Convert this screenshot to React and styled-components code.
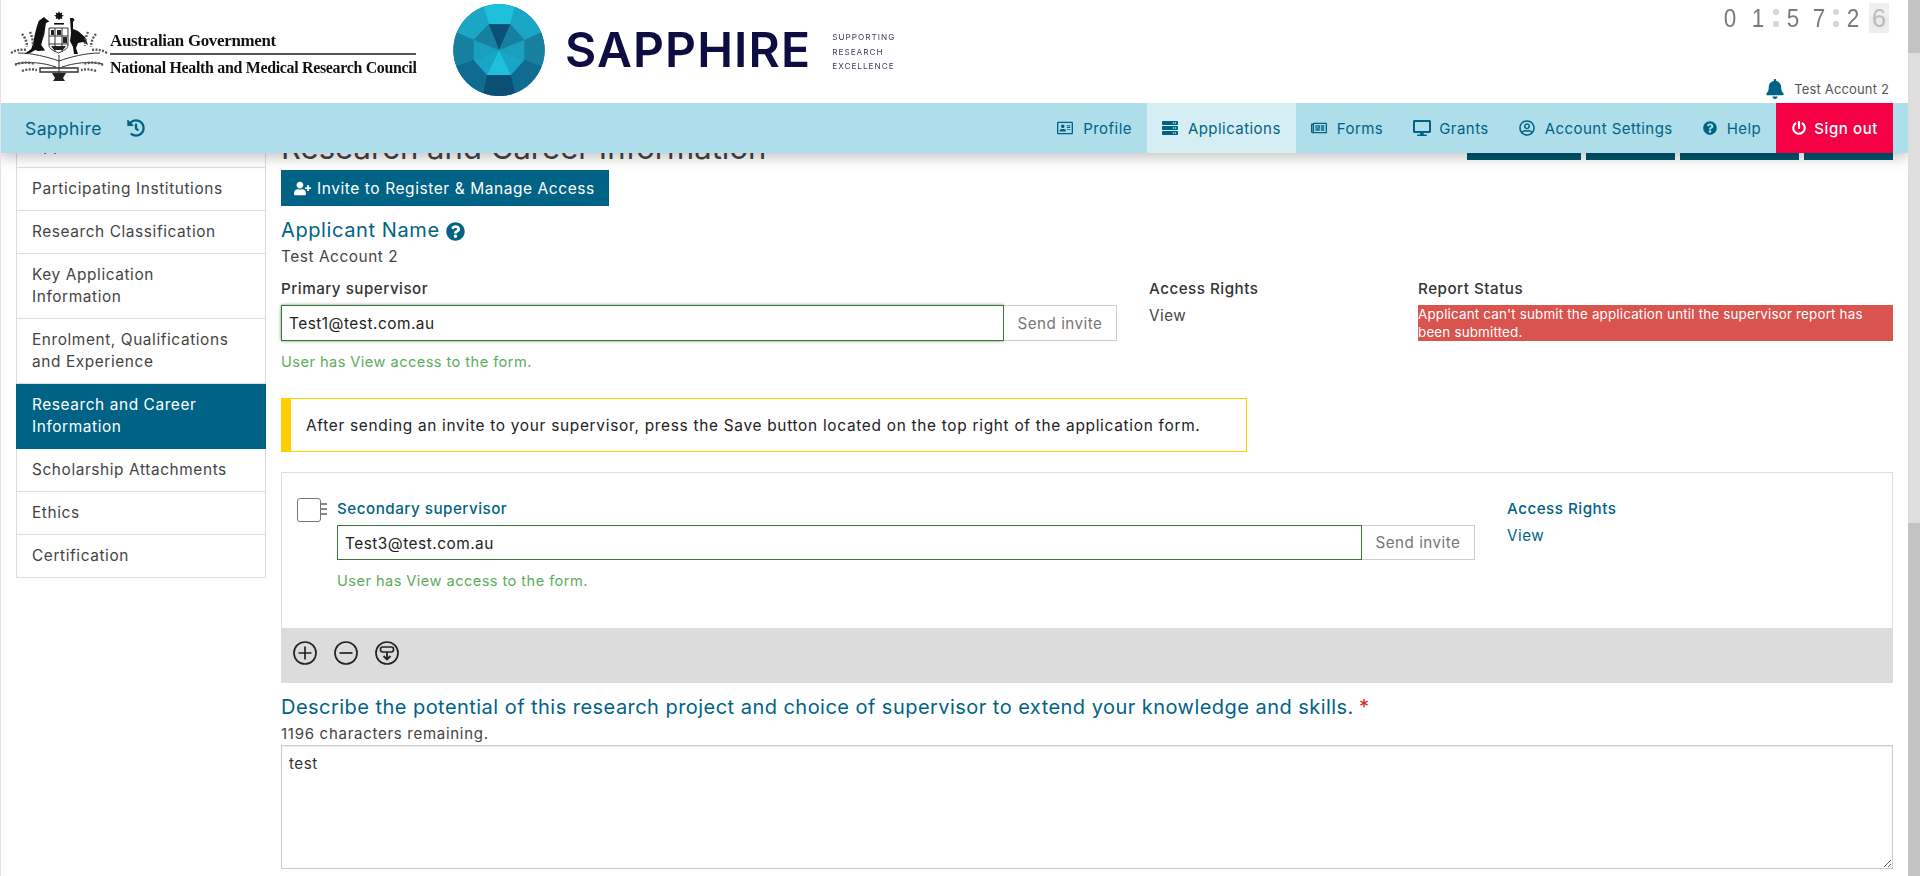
import React from "react";
import styled, { createGlobalStyle } from "styled-components";
import {
  FaRegAddressCard, FaServer, FaRegNewspaper, FaDesktop, FaRegUserCircle,
  FaQuestionCircle, FaPowerOff, FaHistory, FaBell, FaUserPlus,
} from "react-icons/fa";

const BRAND = "#006386";
const FONT = `Inter, "Open Sans", "Liberation Sans", sans-serif`;

const Global = createGlobalStyle`
  html, body { margin: 0; padding: 0; height: 100%; background: #fff; overflow: hidden; }
  body { font-family: ${FONT}; font-size: 15px; color: #444; }
  * { box-sizing: border-box; }
`;

const Shell = styled.div`display: flex; height: 876px; overflow: hidden;`;
const Viewport = styled.div`flex: 1; min-width: 0; overflow: hidden; border-left: 1px solid #e4e4e4;`;
const Scrollbar = styled.div`width: 12px; display: flex; flex-direction: column; background: #dedede;`;
const Thumb = styled.div`height: ${p => p.$h}px; margin-top: ${p => p.$top}px; background: #c3c3c3;`;

const Masthead = styled.header`
  height: 103px; margin-left: -1px; background: #fff; display: flex; position: relative; z-index: 3;
`;
const Brands = styled.div`display: flex; align-items: flex-start;`;
const GovLogo = styled.div`display: flex; padding: 11px 0 0 10px; width: 440px; filter: blur(0.3px);`;
const GovText = styled.div`
  margin-left: 2px; padding-top: 21px; width: 306px; color: #111;
  font-family: "Liberation Serif", serif; font-weight: 700;
`;
const GovLine = styled.div`line-height: 18px; white-space: nowrap; font-size: ${p => p.$size}px; letter-spacing: -0.3px;`;
const GovRule = styled.div`height: 2px; background: #555; margin: 3px 0 4px;`;
const SapphireLogo = styled.div`display: flex; align-items: flex-start; padding: 4px 0 0 13px; filter: blur(0.25px);`;
const Wordmark = styled.div`
  margin-left: 20px; margin-top: 17px; font-family: "Inter", sans-serif; font-weight: 600;
  font-size: 48px; line-height: 58px; color: #0d0d42; letter-spacing: 1.15px;
`;
const Tagline = styled.div`
  margin-left: 21px; margin-top: 26px; font-size: 8.2px; line-height: 14.5px; letter-spacing: 1px; color: #3c3c68;
`;
const MastRight = styled.div`
  margin-left: auto; width: 190px; padding-right: 19px; display: flex; flex-direction: column; align-items: flex-end;
`;
const Clock = styled.div`
  display: flex; align-items: center; margin-top: 3px; height: 30px;
  font-family: "Liberation Sans", sans-serif; font-size: 25px; color: #7b7b7b;
`;
const Digit = styled.span`
  width: ${p => p.$w || 28}px; text-align: center; display: inline-block; line-height: 30px;
  transform: scaleX(.9);
`;
const Colon = styled.span`
  display: flex; flex-direction: column; gap: 6px; width: 8px; align-items: center;
  &::before, &::after { content: ""; width: 6px; height: 6px; border-radius: 50%; background: #d6d6d6; }
`;
const LastDigit = styled.span`
  width: 20px; height: 30px; margin-left: 3px; background: linear-gradient(#f0f0f0 0 45%, #e9e9e9 48%, #efefef 100%);
  color: #bbb; text-align: center; line-height: 30px; display: block;
`;
const UserLine = styled.div`
  margin-top: 45px; display: flex; align-items: center; gap: 9px; font-size: 13px; color: #555; height: 22px; letter-spacing: .15px;
  svg { color: ${BRAND}; font-size: 20px; }
`;

const NavBar = styled.nav`
  position: relative; z-index: 2; height: 50px; margin-left: -1px; padding: 0 15px 0 25px;
  display: flex; align-items: stretch; background: #addee9;
  box-shadow: 0 5px 12px rgba(0,0,0,.22);
`;
const Home = styled.a`
  display: flex; align-items: center; gap: 25px; font-size: 17.5px; letter-spacing: .4px; color: ${BRAND};
  svg { font-size: 18px; }
`;
const NavItems = styled.div`margin-left: auto; display: flex; align-items: stretch;`;
const NavItem = styled.a`
  display: flex; align-items: center; gap: ${p => p.$gap || 10}px; padding: 0 15px; font-size: 15px; letter-spacing: .45px; color: ${BRAND};
  background: ${p => (p.$active ? "#d4eef4" : "transparent")};
  svg { font-size: ${p => p.$icon || 16}px; }
`;
const SignOut = styled(NavItem)`background: #f50044; color: #fff; font-weight: 500; padding: 0 15px 0 16px; gap: 8px; letter-spacing: .6px;`;

const PageBody = styled.div`
  margin-top: -40px; padding: 0 15px 0 15px; display: grid; grid-template-columns: 250px 1612px; column-gap: 15px;
`;
const SideNav = styled.div`margin-top: 12px; display: flex; flex-direction: column;`;
const SideItem = styled.a`
  display: block; padding: 10px 15px; border: 1px solid #ddd; border-top: 0; line-height: 22px; font-size: 15.4px; letter-spacing: .6px;
  background: ${p => (p.$active ? BRAND : "#fff")}; color: ${p => (p.$active ? "#fff" : "#444")};
  ${p => p.$active && "border-color: #006386;"}
`;
const Main = styled.main`display: flex; flex-direction: column; min-width: 0;`;
const TitleRow = styled.div`height: 47px; display: flex; justify-content: space-between; align-items: flex-end;`;
const Title = styled.h1`
  margin: 19px 0 0; align-self: flex-start; font-size: 31px; line-height: 32px; font-weight: 400; color: #444; letter-spacing: .05px; white-space: nowrap;
`;
const TitleActions = styled.div`display: flex; gap: 5px;`;
const TitleAction = styled.div`width: ${p => p.$w}px; height: 40px; background: #00566f;`;

const InviteButton = styled.button`
  position: relative; margin-top: 10px; width: 328px; height: 36px; border: 0; background: ${BRAND}; color: #fff; padding: 0 0 0 13px;
  display: flex; align-items: center; gap: 6px; font: 15.5px ${FONT}; letter-spacing: .57px;
  svg { font-size: 17px; }
`;
const SectionHeading = styled.div`
  margin-top: ${p => p.$top}px; line-height: 26px; font-size: 20px; letter-spacing: ${p => p.$ls}px; color: ${BRAND}; display: flex; align-items: center; gap: 6px;
  svg { font-size: 19px; margin-top: 3px; }
`;
const Star = styled.span`color: #d9231c; margin-left: -1px;`;
const PlainValue = styled.div`margin-top: 3px; line-height: 22px; font-size: 15.4px; letter-spacing: .55px; color: #444;`;

const SupervisorGrid = styled.div`margin-top: 10px; display: grid; grid-template-columns: 868px 269px 1fr;`;
const FieldColumn = styled.div`padding-right: 32px;`;
const ColumnLabel = styled.div`
  line-height: 22px; font-weight: 500; font-size: 15.2px; letter-spacing: .5px; color: ${p => p.$color || "#333"}; margin-bottom: ${p => p.$gap ?? 5}px;
`;
const ColumnValue = styled.div`line-height: 22px; color: ${p => p.$color || "#444"}; font-size: 15.2px; letter-spacing: .5px;`;
const InviteField = styled.div`display: flex; height: 36px;`;
const EmailInput = styled.input`
  flex: 1; min-width: 0; height: 100%; padding: 1px 7px 0; font: 15.4px ${FONT}; letter-spacing: .5px; color: #222; background: #fff; outline: 0;
  border: 1px solid #3c763d;
  ${p => p.$glow && "box-shadow: 0 0 3px rgba(60,118,61,.75); border-width: 1.5px;"}
`;
const SendInvite = styled.button`
  width: 113px; height: 100%; background: #fff; border: 1px solid #ccc; border-left: 0; color: #777; font: 15.2px ${FONT}; letter-spacing: .5px; padding: 0;
`;
const SuccessText = styled.div`margin-top: 10px; line-height: 22px; font-size: 14.6px; letter-spacing: .45px; color: #5cad5c;`;
const StatusBox = styled.div`height: 36px; background: #d9534f; color: #fff; font-size: 13.4px; letter-spacing: .18px; line-height: 18px;`;

const Warning = styled.div`
  margin-top: 25px; width: 966px; height: 54px; display: flex; align-items: center; padding-left: 15px;
  border: 1px solid #ffd000; border-left: 10px solid #ffd000; font-size: 15.4px; letter-spacing: .71px; color: #222; white-space: nowrap;
`;

const Panel = styled.section`margin-top: 20px; display: flex; flex-direction: column; height: 211px;`;
const PanelBody = styled.div`
  flex: 1; border: 1px solid #ddd; border-bottom: 0; padding: 25px 15px 0 15px;
  display: grid; grid-template-columns: 40px 1138px 1fr;
`;
const RowCheck = styled.div`display: flex; align-items: flex-start;`;
const CheckBox = styled.div`width: 24px; height: 24px; border: 1px solid #777; border-radius: 3px; background: #fff;`;
const Grip = styled.div`
  width: 6px; margin-top: 5px; height: 13px;
  background: repeating-linear-gradient(#888 0 2px, transparent 2px 5px);
`;
const AccessColumn = styled.div`padding-left: 32px;`;
const SecondaryField = styled(InviteField)`height: 35px;`;
const Toolbar = styled.div`height: 55px; background: #dcdcdc; display: flex; align-items: center; padding: 0 0 5px 12px; gap: 17px;`;
const ToolIcon = styled.svg`width: 24px; height: 24px; fill: none; stroke: #222; stroke-width: 1.7;`;

const CharsLeft = styled.div`margin-top: 4px; line-height: 20px; font-size: 15px; letter-spacing: .72px; color: #444;`;
const Answer = styled.textarea`
  margin-top: 1px; width: 100%; height: 124px; display: block; padding: 7px 7px; border: 1px solid #ccc;
  box-shadow: inset 0 1px 1px rgba(0,0,0,.08); outline: 0;
  font: 15.2px/22px ${FONT}; letter-spacing: .5px; color: #333; resize: vertical;
`;

const Crest = () => (
  <svg width="98" height="72" viewBox="0 0 98 72" aria-hidden="true">
    <g fill="#111">
      <path d="M49 0l1 2.2 2.4-.7-.7 2.3 2.2 1-2.2 1 .7 2.3-2.4-.7-1 2.2-1-2.2-2.4.7.7-2.3-2.2-1 2.2-1-.7-2.3 2.4.7z" />
      <rect x="44" y="12" width="10" height="1.6" />
      <path d="M34 6l2 2 3.5 2.5-3.5 1.5-.8 5-.8 6-2.2 7-1 4 4 5.5-7 .5-3-1-5 3-6 1 7-5 2-6 1.5-8 2-8 2-6z" />
      <path d="M60 7h3l1.5 2-1.5 2v7l5 2 7 6 3 8-5-3-5 1-2 5 2 6h-4l-1-7-3-6 1-8z" />
    </g>
    <g fill="none" stroke="#333" strokeWidth="1">
      <path d="M39 17h19v17c0 4-5 6-9.500 8-4.500-2-9.500-4-9.500-8z" />
      <path d="M39 25h19M39 33h19M45 17v24M52 17v24" />
      <path d="M49 44v18M49 50C38 46 22 42 8 42M49 50c11-4 27-8 41-8" />
      <path d="M46 56C34 52 20 50 5 53M52 56c12-4 26-6 41-3" />
      <path d="M30 57h38v4H30z" strokeWidth="1.4" />
      <g stroke="#555" strokeWidth="2.4" strokeDasharray="2 1.4">
        <path d="M12 23c3 3 5 8 5 13M20 21c2 4 3 9 3 14M86 23c-3 3-5 8-5 13M78 21c-2 4-3 9-3 14" />
        <path d="M1 42c5-3 10-4 16-3M97 42c-5-3-10-4-16-3" />
        <path d="M5 54c6-3 13-3 20-1M93 54c-6-3-13-3-20-1M12 60c5-2 10-2 15-1M86 60c-5-2-10-2-15-1" />
      </g>
    </g>
    <path d="M41 19h3v5h-3zM47 19h4v5h-4zM53 26h4v6h-4zM41 35h15l-3 4h-9z" fill="#222" />
    <path d="M42 62h14l-3 5 2 3H43l2-3z" fill="#222" />
  </svg>
);

const Facet = ({ p, c }) => <polygon points={p} fill={c} />;
const Gem = () => (
  <svg width="92" height="92" viewBox="38 12 276 276" aria-hidden="true">
    <defs><clipPath id="gemclip"><ellipse cx="176" cy="150" rx="137" ry="138" /></clipPath></defs>
    <g clipPath="url(#gemclip)">
      <rect x="30" y="5" width="290" height="290" fill="#16819f" />
      <Facet p="125,5 228,5 210,73 145,73" c="#1fc0dc" />
      <Facet p="228,5 320,90 252,120 210,73" c="#1aa6c4" />
      <Facet p="125,5 32,90 100,120 145,73" c="#1aa6c4" />
      <Facet p="252,120 320,90 320,205 252,180" c="#17809f" />
      <Facet p="100,120 32,90 32,205 100,180" c="#17809f" />
      <Facet p="252,180 320,205 228,295 212,225" c="#0f6b90" />
      <Facet p="100,180 32,205 125,295 140,225" c="#0f6b90" />
      <Facet p="140,225 212,225 228,295 125,295" c="#0c4f74" />
      <Facet p="145,73 210,73 176,150" c="#0c5078" />
      <Facet p="210,73 252,120 176,150" c="#17809f" />
      <Facet p="145,73 100,120 176,150" c="#17809f" />
      <Facet p="252,120 252,180 176,150" c="#1a9fbf" />
      <Facet p="100,120 100,180 176,150" c="#1a9fbf" />
      <Facet p="252,180 212,225 176,150" c="#19a6c6" />
      <Facet p="100,180 140,225 176,150" c="#19a6c6" />
      <Facet p="140,225 212,225 176,150" c="#1fc0dc" />
    </g>
  </svg>
);

const sideItems = [
  "Application Details", "Participating Institutions", "Research Classification",
  "Key Application Information", "Enrolment, Qualifications and Experience",
  "Research and Career Information", "Scholarship Attachments", "Ethics", "Certification",
];
const narrowItems = { "Key Application Information": 160, "Enrolment, Qualifications and Experience": 212, "Research and Career Information": 180 };

const SideLabel = styled.span`display: block; max-width: ${p => p.$max}px;`;

export default function App() {
  return (
    <Shell>
      <Global />
      <Viewport>
        <Masthead>
          <Brands>
            <GovLogo>
              <Crest />
              <GovText>
                <GovLine $size={16.9}>Australian Government</GovLine>
                <GovRule />
                <GovLine $size={15.9}>National Health and Medical Research Council</GovLine>
              </GovText>
            </GovLogo>
            <SapphireLogo>
              <Gem />
              <Wordmark>SAPPHIRE</Wordmark>
              <Tagline>SUPPORTING<br />RESEARCH<br />EXCELLENCE</Tagline>
            </SapphireLogo>
          </Brands>
          <MastRight>
            <Clock>
              <Digit>0</Digit><Digit>1</Digit><Colon />
              <Digit $w={26}>5</Digit><Digit $w={26}>7</Digit><Colon />
              <Digit $w={26}>2</Digit><LastDigit>6</LastDigit>
            </Clock>
            <UserLine><FaBell />Test Account 2</UserLine>
          </MastRight>
        </Masthead>
        <NavBar>
          <Home>Sapphire <FaHistory /></Home>
          <NavItems>
            <NavItem><FaRegAddressCard />Profile</NavItem>
            <NavItem $active><FaServer />Applications</NavItem>
            <NavItem><FaRegNewspaper />Forms</NavItem>
            <NavItem $gap={8} $icon={18}><FaDesktop />Grants</NavItem>
            <NavItem $icon={16}><FaRegUserCircle />Account Settings</NavItem>
            <NavItem $icon={14}><FaQuestionCircle />Help</NavItem>
            <SignOut $icon={14}><FaPowerOff />Sign out</SignOut>
          </NavItems>
        </NavBar>
        <PageBody>
          <SideNav>
            {sideItems.map(t => (
              <SideItem key={t} $active={t === "Research and Career Information"}>
                <SideLabel $max={narrowItems[t] || 230}>{t}</SideLabel>
              </SideItem>
            ))}
          </SideNav>
          <Main>
            <TitleRow>
              <Title>Research and Career Information</Title>
              <TitleActions>
                <TitleAction $w={114} /><TitleAction $w={89} /><TitleAction $w={119} /><TitleAction $w={89} />
              </TitleActions>
            </TitleRow>
            <InviteButton><FaUserPlus />Invite to Register &amp; Manage Access</InviteButton>
            <SectionHeading $top={11} $ls={0.6}>Applicant Name <FaQuestionCircle /></SectionHeading>
            <PlainValue>Test Account 2</PlainValue>
            <SupervisorGrid>
              <FieldColumn>
                <ColumnLabel>Primary supervisor</ColumnLabel>
                <InviteField>
                  <EmailInput $glow readOnly value="Test1@test.com.au" />
                  <SendInvite>Send invite</SendInvite>
                </InviteField>
                <SuccessText>User has View access to the form.</SuccessText>
              </FieldColumn>
              <div>
                <ColumnLabel>Access Rights</ColumnLabel>
                <ColumnValue>View</ColumnValue>
              </div>
              <div>
                <ColumnLabel>Report Status</ColumnLabel>
                <StatusBox>Applicant can't submit the application until the supervisor report has been submitted.</StatusBox>
              </div>
            </SupervisorGrid>
            <Warning>After sending an invite to your supervisor, press the Save button located on the top right of the application form.</Warning>
            <Panel>
              <PanelBody>
                <RowCheck><CheckBox /><Grip /></RowCheck>
                <div>
                  <ColumnLabel $color={BRAND} $gap={5}>Secondary supervisor</ColumnLabel>
                  <SecondaryField>
                    <EmailInput readOnly value="Test3@test.com.au" />
                    <SendInvite>Send invite</SendInvite>
                  </SecondaryField>
                  <SuccessText>User has View access to the form.</SuccessText>
                </div>
                <AccessColumn>
                  <ColumnLabel $color={BRAND} $gap={5}>Access Rights</ColumnLabel>
                  <ColumnValue $color={BRAND}>View</ColumnValue>
                </AccessColumn>
              </PanelBody>
              <Toolbar>
                <ToolIcon viewBox="0 0 24 24"><circle cx="12" cy="12" r="11" /><path d="M12 5.500v13M5.500 12h13" /></ToolIcon>
                <ToolIcon viewBox="0 0 24 24"><circle cx="12" cy="12" r="11" /><path d="M5.500 12h13" /></ToolIcon>
                <ToolIcon viewBox="0 0 24 24"><circle cx="12" cy="12" r="11" /><rect x="5.500" y="6" width="13" height="5" rx="2.200" /><path d="M12 11v7.500M8.500 15l3.500 3.500 3.500-3.500" strokeWidth="1.800" /></ToolIcon>
              </Toolbar>
            </Panel>
            <SectionHeading $top={11} $ls={0.46}>
              <span>Describe the potential of this research project and choice of supervisor to extend your knowledge and skills. <Star>*</Star></span>
            </SectionHeading>
            <CharsLeft>1196 characters remaining.</CharsLeft>
            <Answer readOnly value="test" />
          </Main>
        </PageBody>
      </Viewport>
      <Scrollbar>
        <Thumb $top={0} $h={53} />
        <Thumb $top={470} $h={353} />
      </Scrollbar>
    </Shell>
  );
}
